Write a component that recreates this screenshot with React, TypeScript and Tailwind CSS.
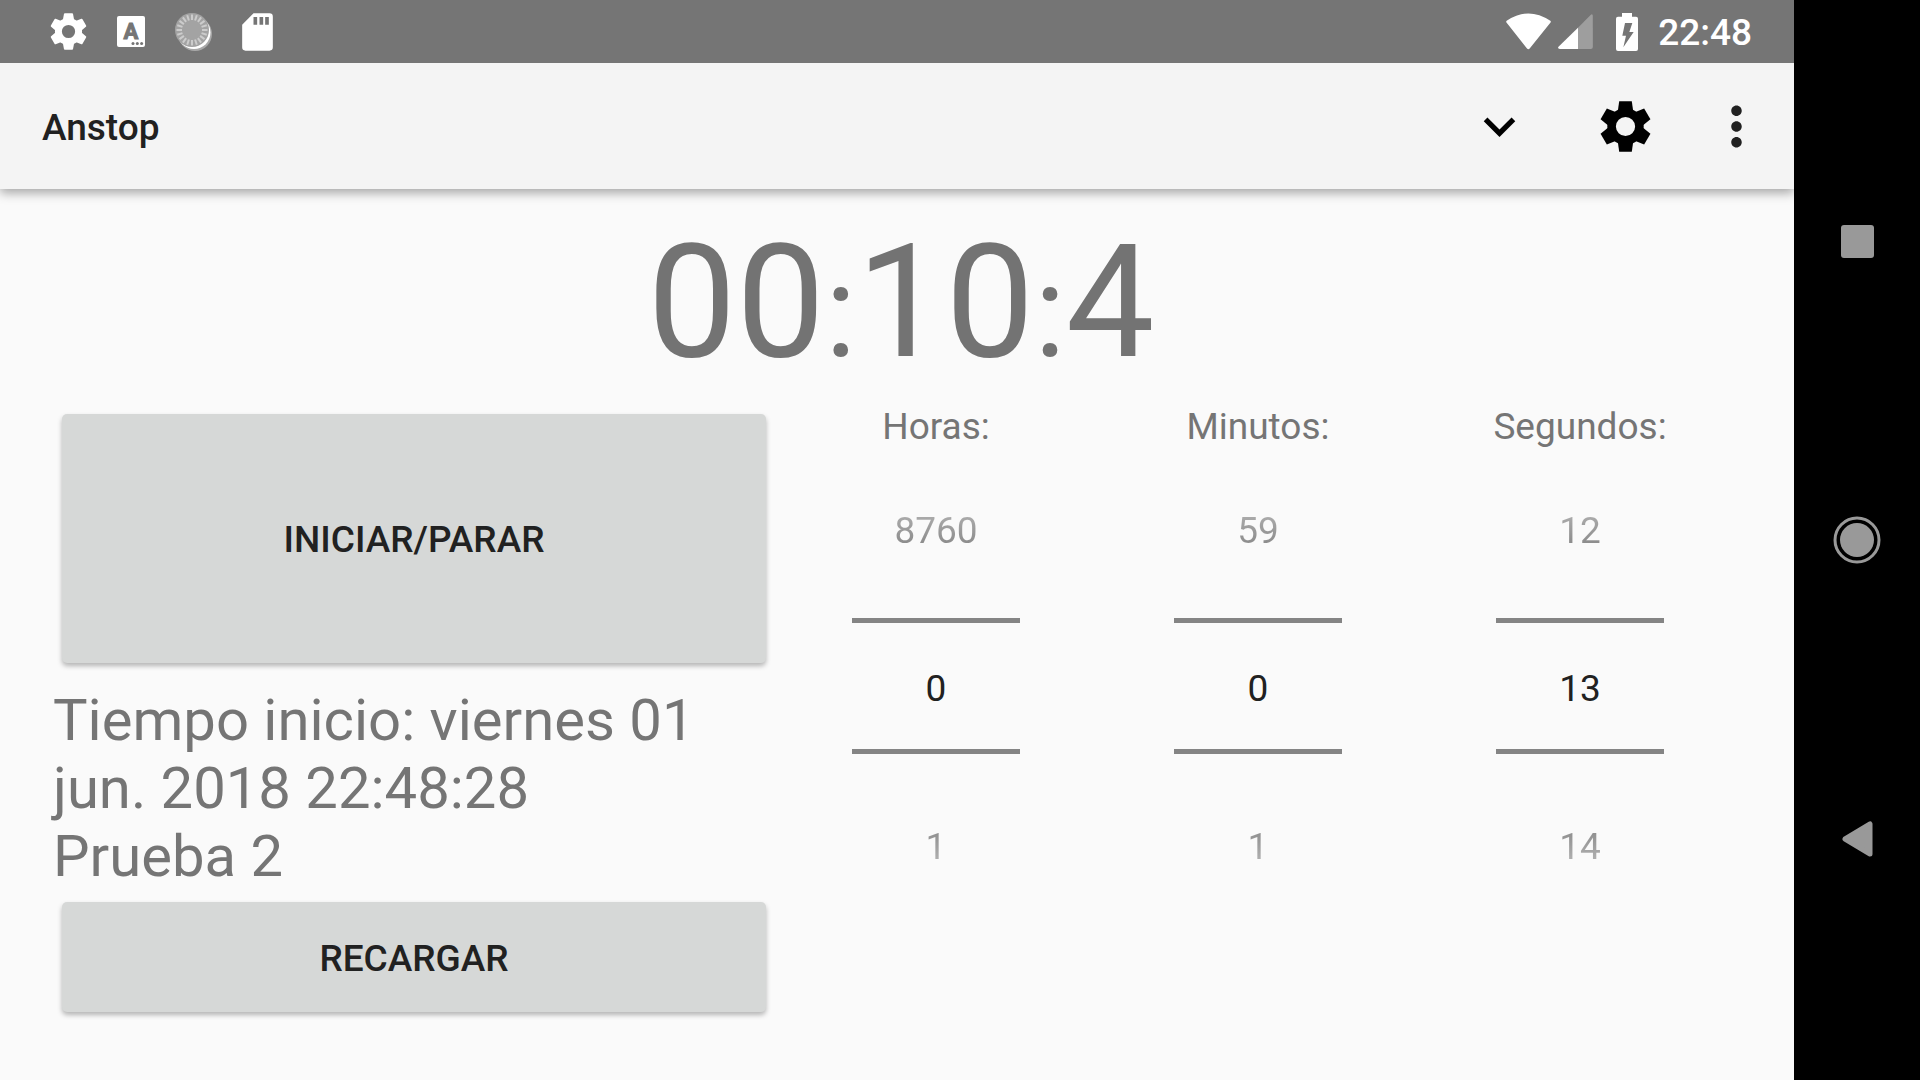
import { useState } from "react";
import { MdExpandMore, MdMoreVert } from "react-icons/md";

const TURNS = [0, 60, 120, 180, 240, 300];
const TICKS = Array.from({ length: 20 }, (_, i) => i * 18);

function Gear({ className, rounded = false }: { className: string; rounded?: boolean }) {
  return (
    <svg viewBox="-77 -77 154 154" className={className} aria-hidden="true">
      <circle r="42" fill="none" stroke="currentColor" strokeWidth={rounded ? 29 : 26} />
      {TURNS.map((turn) => (
        <path
          key={turn}
          d={rounded ? "M-15-72H15L19-50H-19Z" : "M-19-76H19L23-48H-23Z"}
          fill="currentColor"
          stroke={rounded ? "currentColor" : "none"}
          strokeWidth="8"
          strokeLinejoin="round"
          transform={`rotate(${turn})`}
        />
      ))}
    </svg>
  );
}

function KeyboardBadge() {
  return (
    <svg viewBox="0 0 28 31" className="h-[31px] w-7" aria-hidden="true">
      <rect width="28" height="31" rx="2" fill="#fff" />
      <text
        x="14"
        y="23"
        textAnchor="middle"
        fontFamily="Roboto, sans-serif"
        fontSize="22"
        fontWeight="700"
        fill="#757575"
        stroke="#757575"
      >
        A
      </text>
      <g fill="#757575">
        <circle cx="16" cy="27.5" r="1.5" />
        <circle cx="20.3" cy="27.5" r="1.5" />
        <circle cx="24.6" cy="27.5" r="1.5" />
      </g>
    </svg>
  );
}

function SyncDisc() {
  return (
    <svg viewBox="0 0 37 38" className="h-[38px] w-[37px]" aria-hidden="true">
      <circle cx="20" cy="21" r="17" fill="#a8a8a8" />
      <circle cx="19" cy="19.5" r="16.5" fill="#fff" />
      <circle cx="17" cy="17" r="17" fill="#a3a3a3" />
      {TICKS.map((turn) => (
        <path
          key={turn}
          d="M17 1.5V7"
          stroke="#cccccc"
          strokeWidth="2"
          transform={`rotate(${turn} 17 17)`}
        />
      ))}
    </svg>
  );
}

function SdCard() {
  return (
    <svg viewBox="0 0 92 114" className="h-[38px] w-[31px]" aria-hidden="true">
      <path
        fill="#fff"
        fillRule="evenodd"
        d="M34 1H82Q92 1 92 11V103Q92 113 82 113H10Q0 113 0 103V35ZM34 12V35H45V12ZM52 12V35H63V12ZM69 12V35H80V12Z"
      />
    </svg>
  );
}

function StatusBar() {
  return (
    <header className="relative z-10 flex h-[63px] shrink-0 items-center justify-between bg-[#757575] pr-[42px] pl-[50px] text-white">
      <div className="flex items-center gap-[30px]">
        <Gear className="size-[37px]" rounded />
        <KeyboardBadge />
        <SyncDisc />
        <SdCard />
      </div>
      <div className="flex items-center">
        <svg viewBox="0 0 135 110" className="mr-[7px] h-[37px] w-[45px]" aria-hidden="true">
          <path
            fill="#fff"
            d="M2 23Q67-21 133 23Q136 26 133 29L71 106Q67 110 63 106L2 29Q-1 26 2 23Z"
          />
        </svg>
        <svg viewBox="0 0 105 106" className="mr-[23px] size-[35px]" aria-hidden="true">
          <path fill="#9e9e9e" d="M60 42L99 2Q105-1 105 6V100Q105 106 99 106H60Z" />
          <path fill="#fff" d="M60 42V106H5Q-3 105 1 99Z" />
        </svg>
        <svg viewBox="0 0 66 114" className="mr-5 h-[38px] w-[22px]" aria-hidden="true">
          <path
            fill="#fff"
            fillRule="evenodd"
            d="M18 0H48V11H60Q66 11 66 17V108Q66 114 60 114H6Q0 114 0 108V17Q0 11 6 11H18ZM27 30L19 68H30L22 103L53 57H40L49 30Z"
          />
        </svg>
        <time className="pt-0.5 text-[37px] leading-[43px] font-medium">22:48</time>
      </div>
    </header>
  );
}

function AppBar() {
  return (
    <div className="relative flex h-[126px] shrink-0 items-center bg-[#f4f4f4] pr-[10px] pl-[42px] shadow-[0_4px_10px_rgba(0,0,0,0.34)]">
      <h1 className="flex-1 pt-0.5 text-[37px] leading-[43px] font-medium text-[#212121]">Anstop</h1>
      <button type="button" aria-label="Modo" className="flex h-full w-[126px] items-center justify-center text-black">
        <MdExpandMore className="size-[63px]" />
      </button>
      <button type="button" aria-label="Ajustes" className="flex h-full w-[126px] items-center justify-center text-black">
        <Gear className="size-[51px]" />
      </button>
      <button type="button" aria-label="Más opciones" className="flex h-full w-24 items-center justify-center text-[#212121]">
        <MdMoreVert className="size-[63px]" />
      </button>
    </div>
  );
}

type PickerProps = { id: string; label: string; previous: number; initial: number; next: number };

function Picker({ id, label, previous, initial, next }: PickerProps) {
  const [value, setValue] = useState(String(initial));
  return (
    <div className="flex flex-col items-center text-[37px] leading-[43px]">
      <label htmlFor={id} className="text-[#757575]">
        {label}
      </label>
      <button
        type="button"
        className="h-[170px] w-[168px] bg-linear-to-b from-[#c8c8c8] from-25% to-[#7c7c7c] to-65% bg-clip-text pb-1.5 text-transparent"
      >
        {previous}
      </button>
      <input
        id={id}
        inputMode="numeric"
        value={value}
        onChange={(event) => setValue(event.target.value)}
        className="h-[136px] w-[168px] border-y-[5px] border-[#848484] pt-1 text-center text-[#212121] outline-none"
      />
      <button
        type="button"
        className="h-[170px] w-[168px] bg-linear-to-t from-[#c8c8c8] from-25% to-[#7c7c7c] to-65% bg-clip-text pt-3.5 text-transparent"
      >
        {next}
      </button>
    </div>
  );
}

const raised =
  "mx-[9px] rounded-[5px] bg-[#d6d8d7] pt-0.5 text-[37px] leading-[43px] font-medium text-[#212121] shadow-[0_3px_5px_rgba(0,0,0,0.28)]";

function NavigationBar() {
  return (
    <nav aria-label="Sistema" className="grid w-[126px] shrink-0 grid-rows-3 bg-black py-[92px] text-[#999999]">
      <button type="button" aria-label="Recientes" className="flex items-center justify-center">
        <span className="size-[33px] rounded-[3px] bg-current" />
      </button>
      <button type="button" aria-label="Inicio" className="flex items-center justify-center">
        <svg viewBox="0 0 48 48" className="size-12" aria-hidden="true">
          <circle cx="24" cy="24" r="22" fill="none" stroke="currentColor" strokeWidth="3" />
          <circle cx="24" cy="24" r="17" fill="currentColor" />
        </svg>
      </button>
      <button type="button" aria-label="Atrás" className="flex items-center justify-center">
        <svg viewBox="0 0 31 36" className="h-9 w-[31px]" aria-hidden="true">
          <path
            d="M3 18L28 3V33Z"
            fill="currentColor"
            stroke="currentColor"
            strokeWidth="5"
            strokeLinejoin="round"
          />
        </svg>
      </button>
    </nav>
  );
}

export default function App() {
  return (
    <div className="flex min-h-screen bg-[#fafafa] font-[Roboto,sans-serif]">
      <div className="flex min-w-0 flex-1 flex-col">
        <StatusBar />
        <AppBar />
        <main className="flex flex-1 flex-col px-[53px] pt-[21px] pb-[68px]">
          <p className="pl-2 text-center text-[158px] leading-[185px] text-[#737373]">
            00<span className="text-[130px] leading-none">:</span>10
            <span className="text-[130px] leading-none">:</span>4
          </p>
          <div className="grid flex-1 grid-cols-[361fr_483fr]">
            <section className="flex flex-col pt-[19px]">
              <button type="button" className={`${raised} min-h-[126px] flex-1`}>
                INICIAR/PARAR
              </button>
              <p className="mt-[23px] mb-3 text-[58px] leading-[68px] text-[#757575]">
                Tiempo inicio: viernes 01 jun. 2018 22:48:28
                <br />
                Prueba 2
              </p>
              <button type="button" className={`${raised} h-[110px]`}>
                RECARGAR
              </button>
            </section>
            <section className="grid grid-cols-3 items-start pt-2.5">
              <Picker id="horas" label="Horas:" previous={8760} initial={0} next={1} />
              <Picker id="minutos" label="Minutos:" previous={59} initial={0} next={1} />
              <Picker id="segundos" label="Segundos:" previous={12} initial={13} next={14} />
            </section>
          </div>
        </main>
      </div>
      <NavigationBar />
    </div>
  );
}
